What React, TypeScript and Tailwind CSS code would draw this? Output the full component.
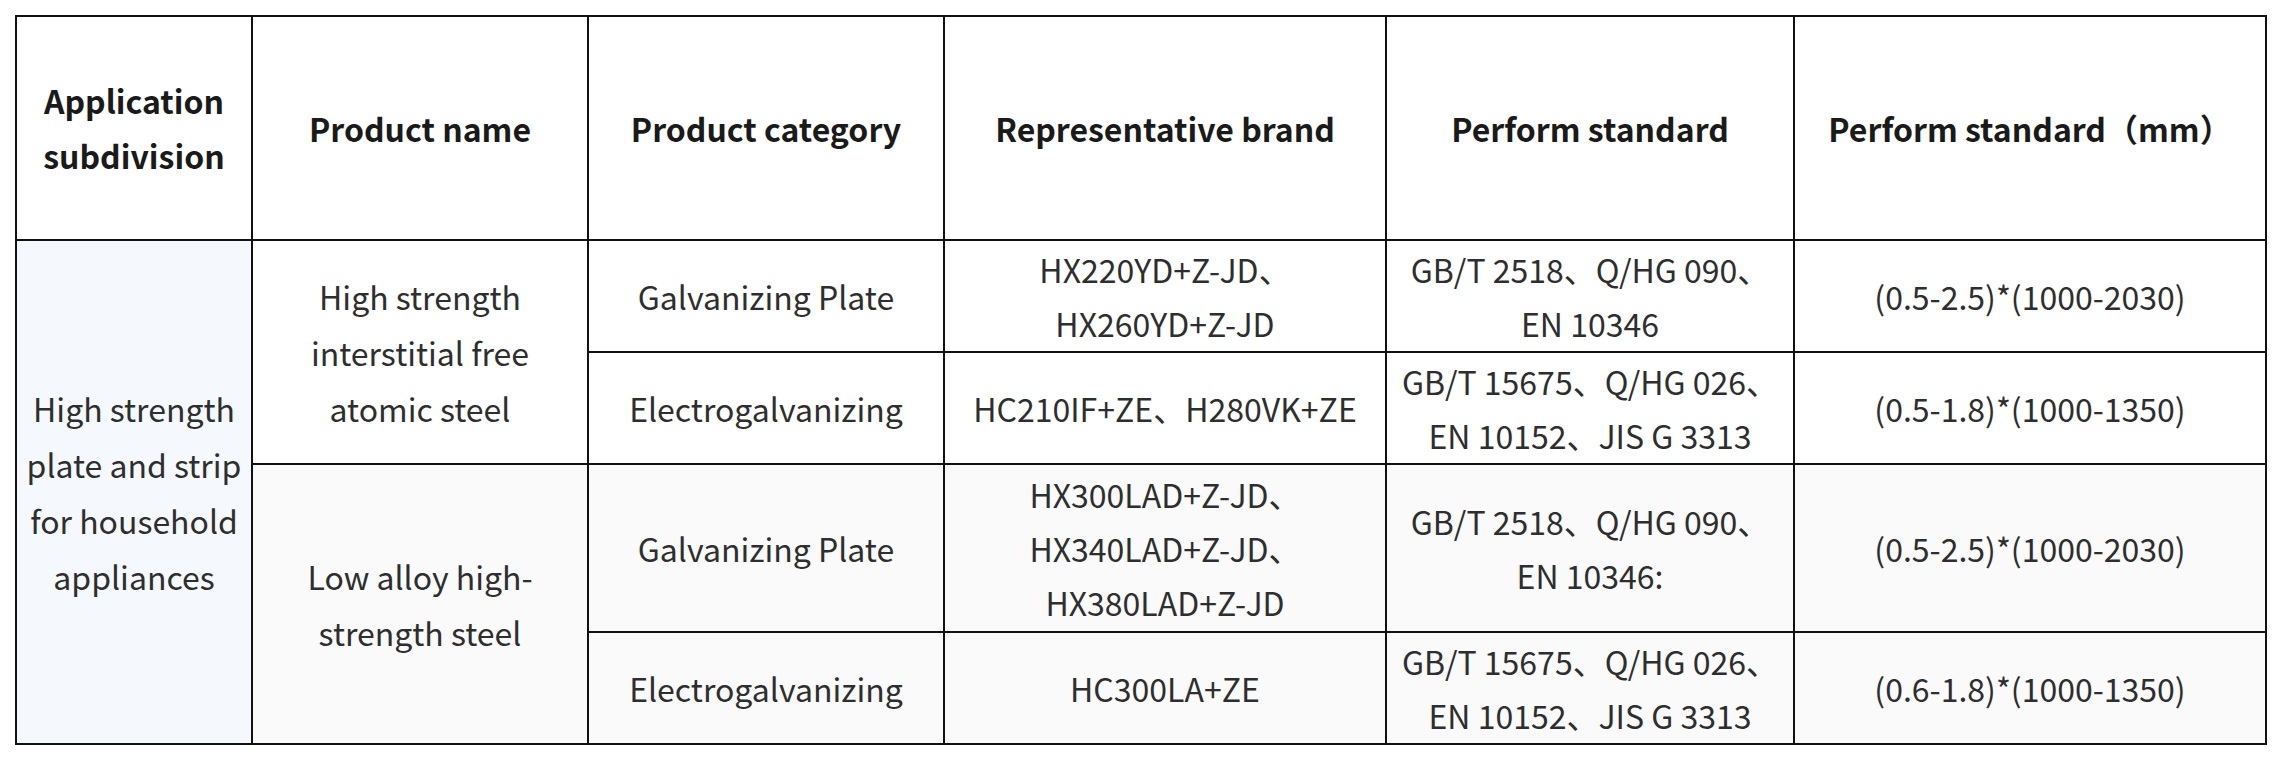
import React from "react";

const F = { fontFamily: '"Noto Sans CJK SC", "Noto Sans", sans-serif' };

export default function App() {
  const th =
    "border-2 border-[#111] font-bold text-[#1a1a1a] text-[32px] leading-[55px] text-center align-middle px-1 py-0";
  const td =
    "border-2 border-[#111] text-[#2e2e2e] text-[32px] leading-[54px] text-center align-middle px-1 py-0";
  return (
    <div className="w-[2280px] h-[760px] bg-white pt-[15px] pl-[15px]" style={F}>
      <table className="table-fixed border-collapse w-[2250px]">
        <colgroup>
          <col className="w-[236px]" />
          <col className="w-[336px]" />
          <col className="w-[356px]" />
          <col className="w-[442px]" />
          <col className="w-[408px]" />
          <col className="w-[472px]" />
        </colgroup>
        <thead>
          <tr className="h-[224px] bg-white">
            <th className={th}>
              Application
              <br />
              subdivision
            </th>
            <th className={th}>Product name</th>
            <th className={th}>Product category</th>
            <th className={th}>Representative brand</th>
            <th className={th}>Perform standard</th>
            <th className={th}>Perform standard（mm）</th>
          </tr>
        </thead>
        <tbody>
          <tr className="h-[112px] bg-white">
            <td rowSpan={4} className={td + " bg-[#f5f9fd] leading-[56px]"}>
              High strength
              <br />
              plate and strip
              <br />
              for household
              <br />
              appliances
            </td>
            <td rowSpan={2} className={td + " leading-[56px]"}>
              High strength
              <br />
              interstitial free
              <br />
              atomic steel
            </td>
            <td className={td}>Galvanizing Plate</td>
            <td className={td}>
              HX220YD+Z-JD、
              <br />
              HX260YD+Z-JD
            </td>
            <td className={td}>
              GB/T 2518、Q/HG 090、
              <br />
              EN 10346
            </td>
            <td className={td}>(0.5-2.5)*(1000-2030)</td>
          </tr>
          <tr className="h-[112px] bg-white">
            <td className={td}>Electrogalvanizing</td>
            <td className={td}>HC210IF+ZE、H280VK+ZE</td>
            <td className={td}>
              GB/T 15675、Q/HG 026、
              <br />
              EN 10152、JIS G 3313
            </td>
            <td className={td}>(0.5-1.8)*(1000-1350)</td>
          </tr>
          <tr className="h-[168px] bg-[#fafafa]">
            <td rowSpan={2} className={td + " leading-[56px]"}>
              Low alloy high-
              <br />
              strength steel
            </td>
            <td className={td}>Galvanizing Plate</td>
            <td className={td}>
              HX300LAD+Z-JD、
              <br />
              HX340LAD+Z-JD、
              <br />
              HX380LAD+Z-JD
            </td>
            <td className={td}>
              GB/T 2518、Q/HG 090、
              <br />
              EN 10346:
            </td>
            <td className={td}>(0.5-2.5)*(1000-2030)</td>
          </tr>
          <tr className="h-[112px] bg-[#fafafa]">
            <td className={td}>Electrogalvanizing</td>
            <td className={td}>HC300LA+ZE</td>
            <td className={td}>
              GB/T 15675、Q/HG 026、
              <br />
              EN 10152、JIS G 3313
            </td>
            <td className={td}>(0.6-1.8)*(1000-1350)</td>
          </tr>
        </tbody>
      </table>
    </div>
  );
}
